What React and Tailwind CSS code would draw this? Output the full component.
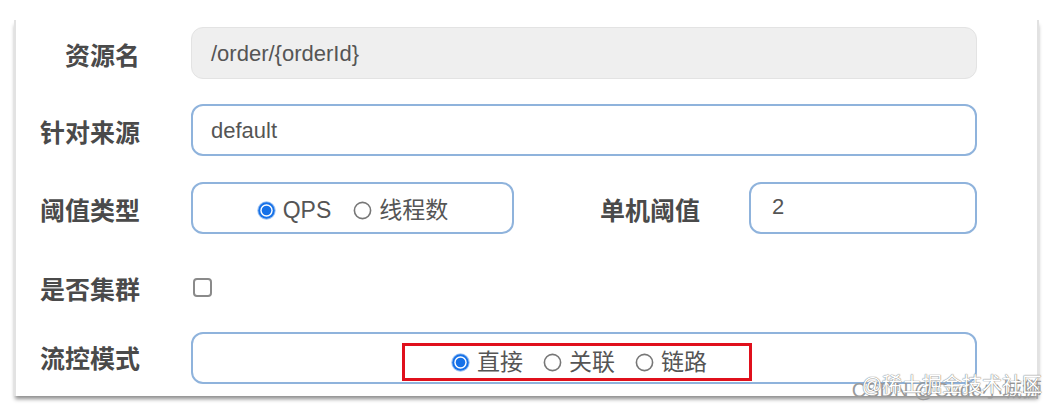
import React from "react";

const font = { fontFamily: '"Liberation Sans", "Noto Sans CJK SC", sans-serif' };

function Radio({ checked, label }) {
  return (
    <span className="flex items-center gap-[7px]">
      {checked ? (
        <svg width="19" height="19" viewBox="0 0 19 19">
          <circle cx="9.5" cy="9.5" r="9.2" fill="#9cc2f2" />
          <circle cx="9.5" cy="9.5" r="8.2" fill="#1671e8" />
          <circle cx="9.5" cy="9.5" r="6.2" fill="#ffffff" />
          <circle cx="9.5" cy="9.5" r="4.8" fill="#1671e8" />
        </svg>
      ) : (
        <svg width="19" height="19" viewBox="0 0 19 19">
          <circle cx="9.5" cy="9.5" r="8.1" fill="#fff" stroke="#777" strokeWidth="1.6" />
        </svg>
      )}
      <span className="text-[23px] leading-none text-[#555]">{label}</span>
    </span>
  );
}

function Label({ children, className = "w-[124px] pt-[6px]" }) {
  return (
    <div className={`${className} shrink-0 text-right text-[25px] font-bold text-[#4a4a4a] leading-none`}>
      {children}
    </div>
  );
}

export default function App() {
  return (
    <div className="relative w-[1058px] h-[409px] bg-white overflow-hidden" style={font}>
      <div className="ml-[14px] mt-[20px] w-[1025px] h-[376px] bg-white border-l-2 border-r-2 border-[#e2e2e2] shadow-[0_4px_4px_-1px_rgba(0,0,0,0.45)]">
        {/* 资源名 */}
        <div className="flex items-center pt-[7px]">
          <Label>资源名</Label>
          <div className="ml-[51px] w-[786px] h-[52px] rounded-[12px] bg-[#efefef] border border-[#e3e3e3] flex items-center pl-[19px]">
            <span className="text-[22px] text-[#555]">/order/{"{orderId}"}</span>
          </div>
        </div>

        {/* 针对来源 */}
        <div className="flex items-center mt-[25px]">
          <Label>针对来源</Label>
          <div className="ml-[51px] w-[786px] h-[52px] rounded-[12px] border-2 border-[#8fb3dc] flex items-center pl-[18px]">
            <span className="text-[22px] text-[#555]">default</span>
          </div>
        </div>

        {/* 阈值类型 / 单机阈值 */}
        <div className="flex items-center mt-[26px]">
          <Label>阈值类型</Label>
          <div className="ml-[51px] w-[323px] h-[52px] rounded-[12px] border-2 border-[#8fb3dc] flex items-center justify-center gap-[22px] pt-[4px]">
            <Radio checked label="QPS" />
            <Radio label="线程数" />
          </div>
          <Label className="w-[186px] pt-[6px]">单机阈值</Label>
          <div className="ml-[49px] w-[228px] h-[52px] rounded-[12px] border-2 border-[#8fb3dc] flex items-center pl-[21px] pb-[4px]">
            <span className="text-[22px] text-[#555]">2</span>
          </div>
        </div>

        {/* 是否集群 */}
        <div className="flex items-center h-[52px] mt-[27px]">
          <Label>是否集群</Label>
          <div className="ml-[53px] w-[19px] h-[19px] rounded-[4px] border-2 border-[#8a8a8a] bg-white" />
        </div>

        {/* 流控模式 */}
        <div className="flex items-center mt-[19px]">
          <Label className="w-[124px] pt-[2px]">流控模式</Label>
          <div className="ml-[51px] w-[786px] h-[52px] rounded-[12px] border-2 border-[#8fb3dc] flex items-start justify-center">
            <div className="mt-[9px] mr-[14px] w-[350px] h-[38px] border-[3px] border-[#e0101c] flex items-center justify-center gap-[20px] pl-[4px]">
              <Radio checked label="直接" />
              <Radio label="关联" />
              <Radio label="链路" />
            </div>
          </div>
        </div>
      </div>

      {/* watermark */}
      <div className="absolute right-[16px] bottom-[9px] text-[20px] leading-none text-[#9a9a9a] whitespace-nowrap">
        CSDN @Code小城狮
      </div>
      <div className="absolute right-[16px] bottom-[14px] text-[20px] leading-none text-white whitespace-nowrap [text-shadow:0_0_1px_#777,0_0_1px_#777]">
        @稀土掘金技术社区
      </div>
    </div>
  );
}
